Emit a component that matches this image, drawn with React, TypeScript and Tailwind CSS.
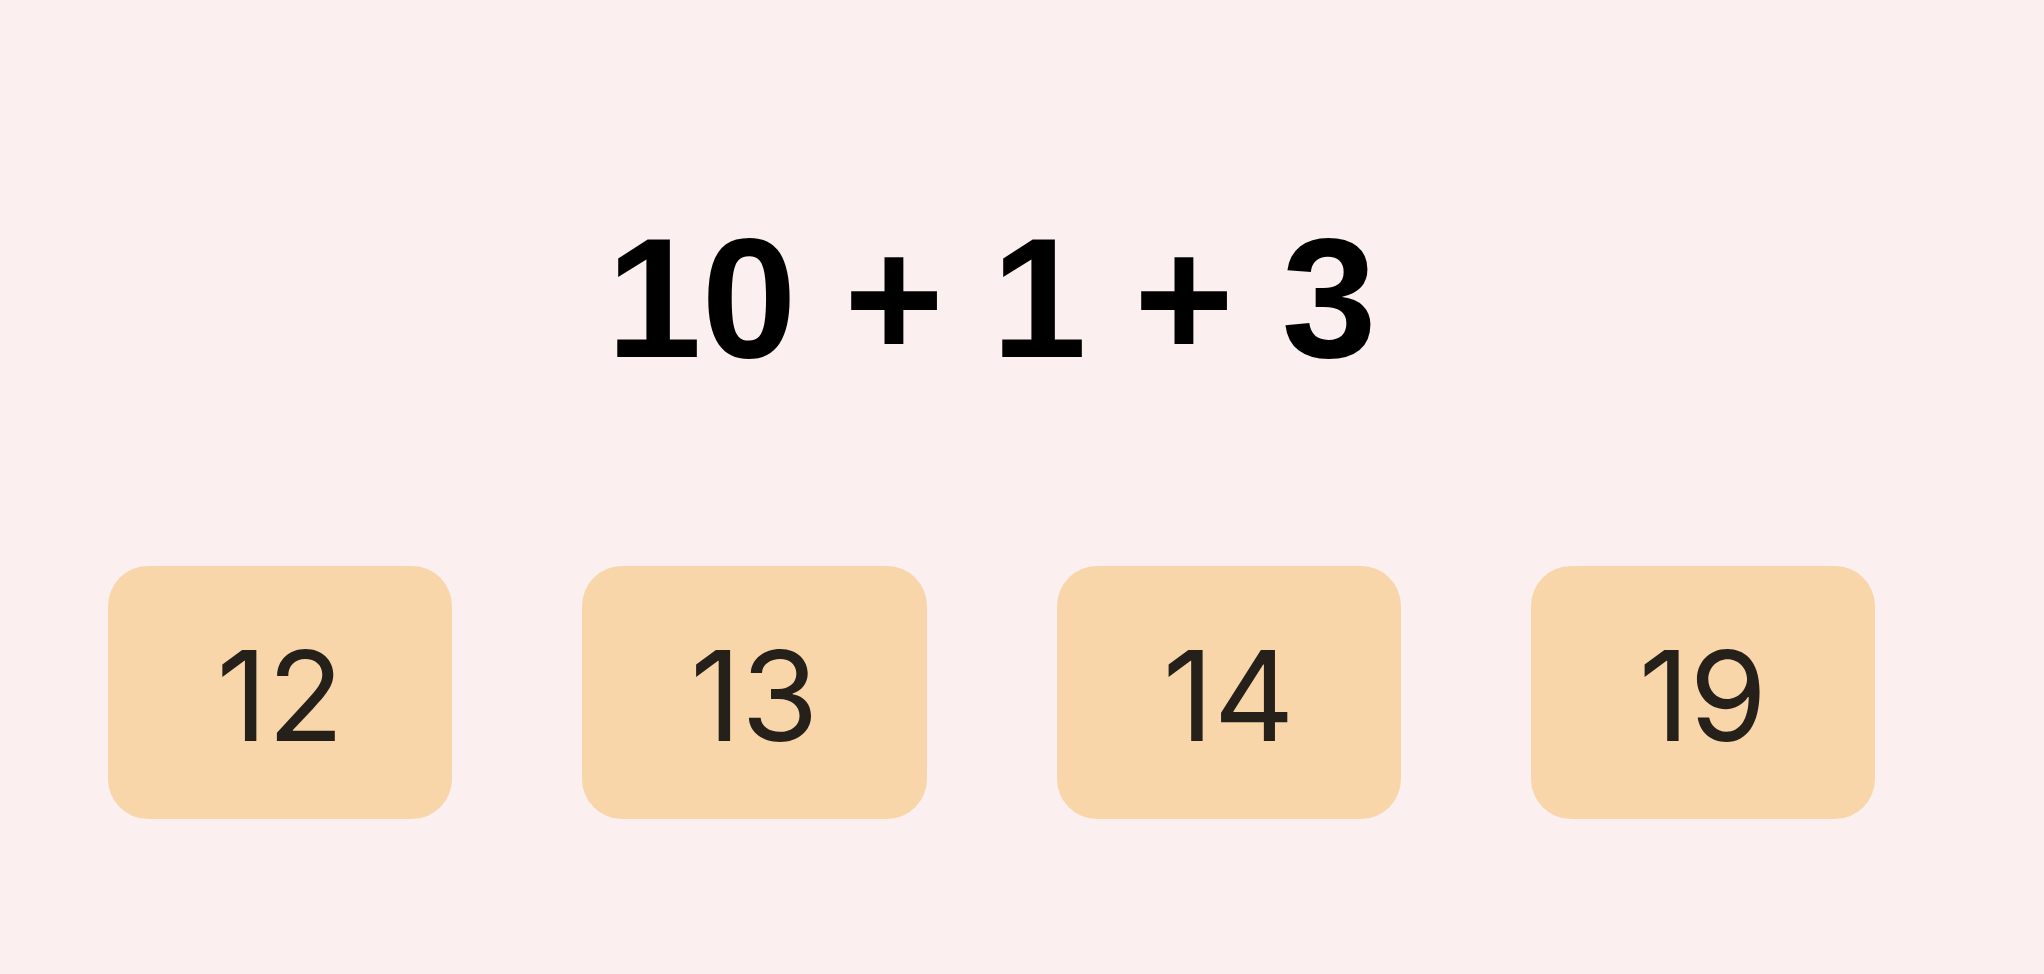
import React from 'react';

const options = [12, 13, 14, 19];

export default function App() {
  return (
    <div className="min-h-screen w-full bg-[#fbefef]">
      <div className="ml-[108px] w-[1767px] pt-[212px]">
        {/* Question */}
        <div className="text-center font-['Liberation_Sans',Arial,sans-serif] text-[171px] font-bold leading-none text-black">
          10 + 1 + 3
        </div>

        {/* Answer choices */}
        <div className="mt-[183px] grid grid-cols-4 gap-[130px]">
          {options.map((n) => (
            <button
              key={n}
              className="flex h-[253px] items-center justify-center rounded-[40px] bg-[#f8d6aa] pt-[6px] font-['Inter',sans-serif] text-[125px] leading-none text-[#26201a]"
            >
              {n}
            </button>
          ))}
        </div>
      </div>
    </div>
  );
}
